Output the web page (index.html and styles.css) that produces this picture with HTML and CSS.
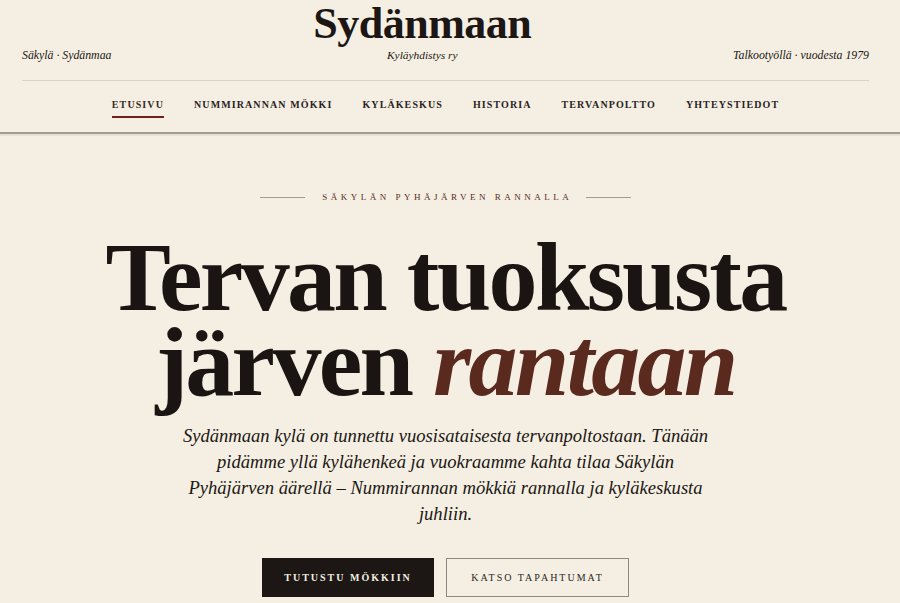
FILE: index.html
```html
<!DOCTYPE html>
<html lang="fi">
<head>
<meta charset="utf-8">
<title>Sydänmaan Kyläyhdistys ry</title>
<link rel="stylesheet" href="styles.css">
</head>
<body>
<header class="site-header">
  <div class="masthead">
    <span class="masthead-side">Säkylä · Sydänmaa</span>
    <div class="brand">
      <div class="brand-name">Sydänmaan</div>
      <div class="brand-sub">Kyläyhdistys ry</div>
    </div>
    <span class="masthead-side">Talkootyöllä · vuodesta 1979</span>
  </div>
  <nav class="main-nav">
    <a class="nav-link active" href="#">Etusivu</a>
    <a class="nav-link" href="#">Nummirannan mökki</a>
    <a class="nav-link" href="#">Kyläkeskus</a>
    <a class="nav-link" href="#">Historia</a>
    <a class="nav-link" href="#">Tervanpoltto</a>
    <a class="nav-link" href="#">Yhteystiedot</a>
  </nav>
</header>
<main class="hero">
  <div class="eyebrow"><span class="eyebrow-rule"></span><span class="eyebrow-text">Säkylän Pyhäjärven rannalla</span><span class="eyebrow-rule"></span></div>
  <h1 class="hero-title">Tervan tuoksusta<br>järven <em>rantaan</em></h1>
  <p class="hero-lead">Sydänmaan kylä on tunnettu vuosisataisesta tervanpoltostaan. Tänään pidämme yllä kylähenkeä ja vuokraamme kahta tilaa Säkylän Pyhäjärven äärellä – Nummirannan mökkiä rannalla ja kyläkeskusta juhliin.</p>
  <div class="hero-actions">
    <a class="btn btn-dark" href="#">Tutustu mökkiin</a>
    <a class="btn btn-outline" href="#">Katso tapahtumat</a>
  </div>
</main>
</body>
</html>
```
FILE: styles.css
```css
html, body {
  margin: 0;
  padding: 0;
}
body {
  background: #f4efe2;
  color: #1c1714;
  font-family: "Liberation Serif", "Times New Roman", serif;
  width: 900px;
  height: 603px;
  overflow: hidden;
}
a {
  color: inherit;
  text-decoration: none;
}
.site-header {
  border-bottom: 2px solid #a29c90;
  box-shadow: 0 2px 0 #e6e0d3;
}
.masthead {
  display: flex;
  justify-content: space-between;
  align-items: flex-end;
  margin: 0 31px 0 22px;
  padding: 2px 0 17px;
  border-bottom: 1px solid #d9d3c5;
}
.masthead-side {
  font-style: italic;
  font-size: 11.8px;
  line-height: 14px;
  padding-bottom: 1px;
}
.brand {
  display: flex;
  flex-direction: column;
  align-items: center;
}
.brand-name {
  font-size: 44px;
  font-weight: 700;
  line-height: 44px;
  letter-spacing: -0.5px;
}
.brand-sub {
  font-style: italic;
  font-size: 11.4px;
  line-height: 14px;
  margin-top: 2px;
  padding-bottom: 1px;
}
.main-nav {
  display: flex;
  justify-content: center;
  gap: 30px;
  padding: 17px 9px 0 0;
  height: 34px;
}
.nav-link {
  font-size: 10px;
  font-weight: 700;
  letter-spacing: 1.1px;
  text-transform: uppercase;
  line-height: 14px;
  height: 18px;
  color: #2a231f;
}
.nav-link.active {
  color: #3a2a24;
  border-bottom: 2px solid #6e1f1a;
}
.hero {
  display: flex;
  flex-direction: column;
  align-items: center;
  padding: 58px 9px 0 0;
}
.eyebrow {
  display: flex;
  align-items: center;
  gap: 17px;
  height: 11px;
}
.eyebrow-rule {
  width: 45px;
  height: 1px;
  background: #a29c90;
}
.eyebrow-text {
  font-size: 9px;
  line-height: 11px;
  letter-spacing: 3.5px;
  text-transform: uppercase;
  color: #5a2b22;
  margin-right: -3.5px;
}
.hero-title {
  margin: 32px 0 0;
  font-size: 98px;
  font-weight: 700;
  line-height: 85px;
  letter-spacing: -2.7px;
  text-align: center;
  color: #1a1512;
}
.hero-title em {
  font-weight: 700;
  color: #5a2a1e;
}
.hero-lead {
  margin: 18px 0 0;
  width: 540px;
  font-size: 18.6px;
  font-style: italic;
  line-height: 26px;
  text-align: center;
}
.hero-actions {
  display: flex;
  gap: 12px;
  margin-top: 31px;
}
.btn {
  display: flex;
  align-items: center;
  justify-content: center;
  height: 39px;
  box-sizing: border-box;
  font-size: 10px;
  font-weight: 700;
  letter-spacing: 2px;
  text-transform: uppercase;
}
.btn-dark {
  width: 172px;
  background: #1c1714;
  color: #f4efe2;
}
.btn-outline {
  width: 183px;
  border: 1px solid #8f887c;
  color: #2a231f;
  font-weight: 400;
}
```
